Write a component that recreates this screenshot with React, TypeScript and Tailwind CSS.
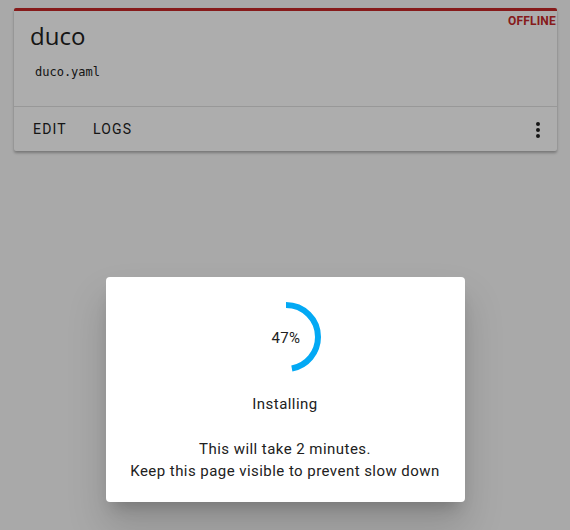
import React from 'react';

const Spinner: React.FC<{ value: number }> = ({ value }) => {
  const r = 32;
  const c = 2 * Math.PI * r;
  return (
    <div className="relative w-[72px] h-[72px]">
      <svg width="72" height="72" viewBox="0 0 72 72" className="-rotate-90">
        <circle
          cx="36"
          cy="36"
          r={r}
          fill="none"
          stroke="#03a9f4"
          strokeWidth="6"
          strokeDasharray={`${(c * value) / 100} ${c}`}
        />
      </svg>
      <div className="absolute inset-0 flex items-center justify-center pt-[2px] text-[15px] text-[#212121] tracking-[0.3px]">
        {value}%
      </div>
    </div>
  );
};

const App: React.FC = () => {
  return (
    <div className="relative w-[570px] h-[530px] bg-[#fafafa] overflow-hidden font-['Roboto',sans-serif]">
      <div className="pt-2 pl-[14px] pr-[13px]">
        <div className="bg-white rounded-[2px] border-t-[3px] border-[#c62828] shadow-[0_2px_3px_rgba(0,0,0,0.3)]">
          <div className="relative px-4 pt-[9px] pb-[25px]">
            <span className="absolute right-[1px] top-[1px] text-[12px] font-bold text-[#c62828] tracking-[0.2px]">OFFLINE</span>
            <h2 className="text-[24px] leading-[32px] text-[#212121] font-['Open_Sans',sans-serif]">duco</h2>
            <div className="mt-[11px] pl-[5px] text-[12px] font-['DejaVu_Sans_Mono',monospace] text-[#212121]">duco.yaml</div>
          </div>
          <div className="border-t border-[#e0e0e0] h-[45px] flex items-center pl-[19px] pr-[7px] pt-[1px]">
            <span className="text-[14px] tracking-[1.2px] text-[#212121]">EDIT</span>
            <span className="ml-[26px] text-[14px] tracking-[1.2px] text-[#212121]">LOGS</span>
            <svg className="ml-auto" width="24" height="24" viewBox="0 0 24 24" fill="#212121">
              <path d="M12,16A2,2 0 0,1 14,18A2,2 0 0,1 12,20A2,2 0 0,1 10,18A2,2 0 0,1 12,16M12,10A2,2 0 0,1 14,12A2,2 0 0,1 12,14A2,2 0 0,1 10,12A2,2 0 0,1 12,10M12,4A2,2 0 0,1 14,6A2,2 0 0,1 12,8A2,2 0 0,1 10,6A2,2 0 0,1 12,4Z" />
            </svg>
          </div>
        </div>
      </div>

      <div className="absolute inset-0 bg-black/[0.32] flex justify-center pt-[277px]">
        <div className="w-[359px] h-[225px] bg-white rounded-[4px] shadow-[0_11px_15px_-7px_rgba(0,0,0,0.2),0_24px_38px_3px_rgba(0,0,0,0.14)] flex flex-col items-center pt-[24px] text-[#212121] tracking-[0.45px]">
          <div className="pl-[2px]">
            <Spinner value={47} />
          </div>
          <div className="mt-[20px] text-[15px] leading-[22px]">Installing</div>
          <div className="mt-[23px] text-[15px] leading-[22px] text-center">
            This will take 2 minutes.
            <br />
            Keep this page visible to prevent slow down
          </div>
        </div>
      </div>
    </div>
  );
};

export default App;
